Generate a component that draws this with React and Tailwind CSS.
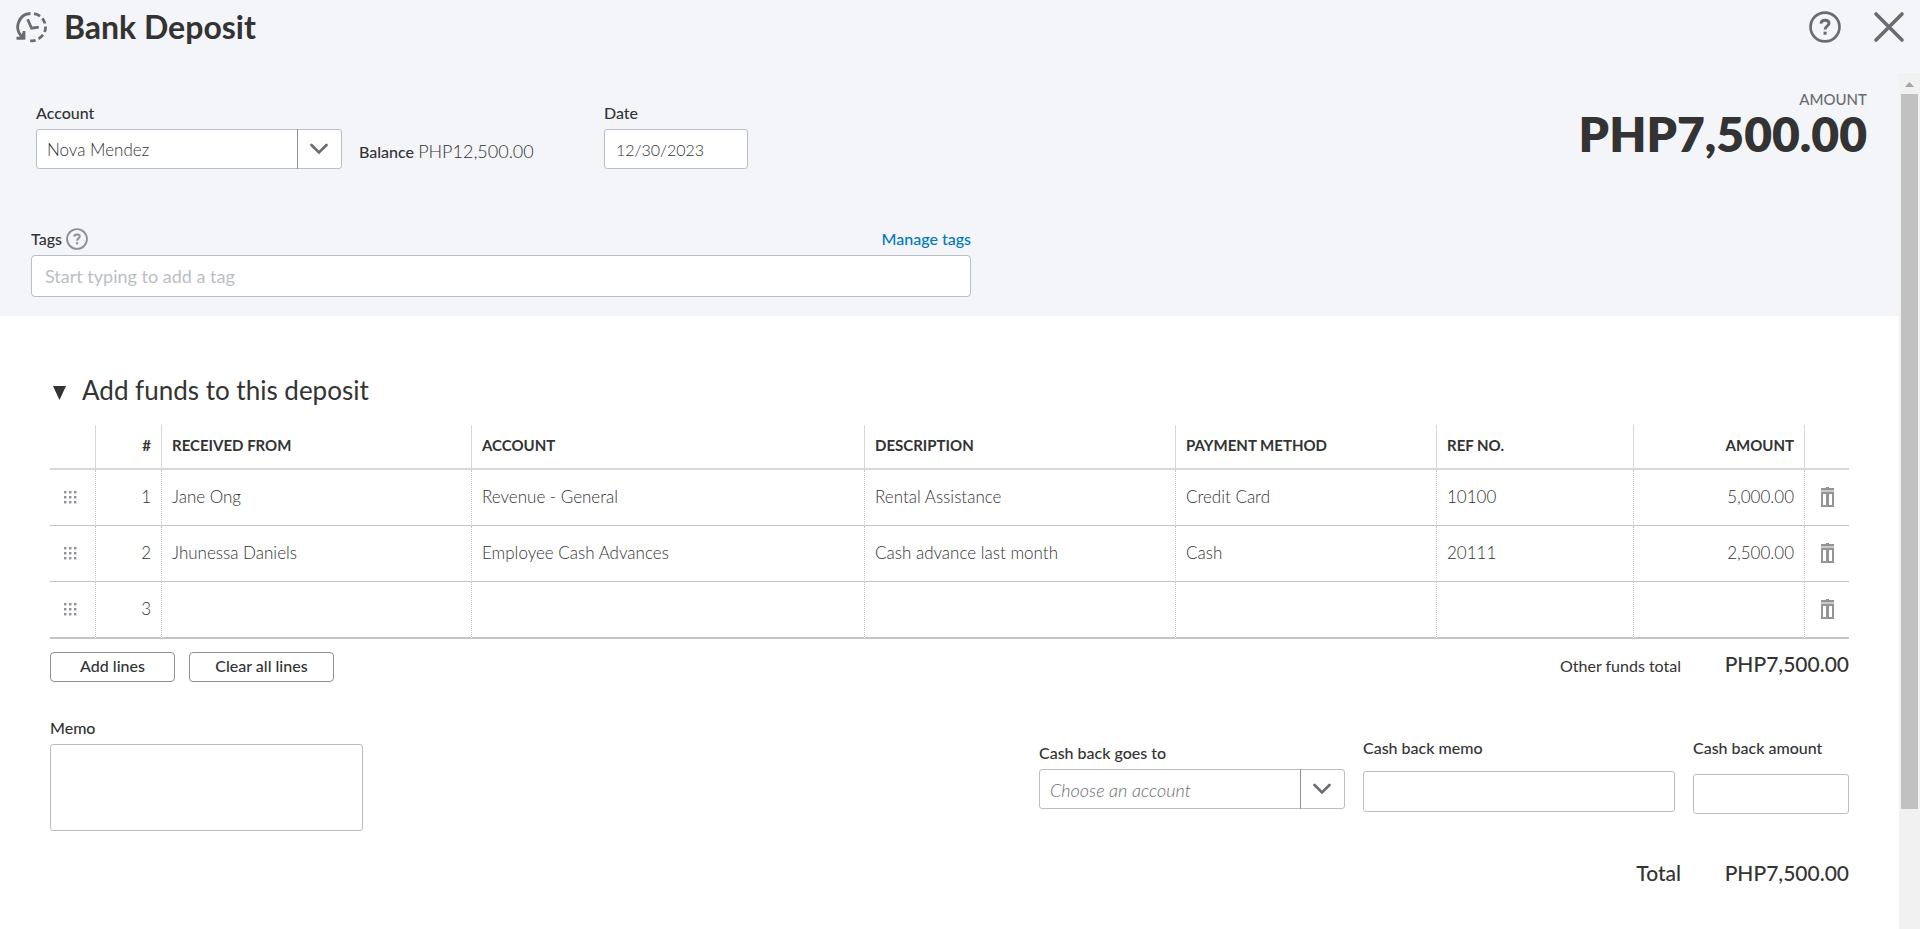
import React, { useState } from "react";

const initialLines = [
  {
    receivedFrom: "Jane Ong",
    account: "Revenue - General",
    description: "Rental Assistance",
    method: "Credit Card",
    refNo: "10100",
    amount: "5,000.00",
  },
  {
    receivedFrom: "Jhunessa Daniels",
    account: "Employee Cash Advances",
    description: "Cash advance last month",
    method: "Cash",
    refNo: "20111",
    amount: "2,500.00",
  },
  {},
];

const labelClass = "block text-[16px] leading-5 font-medium";
const fieldClass =
  "block w-full rounded-[3px] border border-[#babec5] bg-white font-light outline-none";

function HistoryIcon() {
  return (
    <svg width="32" height="32" viewBox="0 0 32 32" fill="none" stroke="#6b6c72" strokeWidth="2.8">
      <path d="M14.5 2.5A13.3 13.3 0 0 0 6 25.5" />
      <path d="M0.5 28.5L8.5 20V28.5Z" fill="#6b6c72" stroke="none" />
      <path d="M8 20V27.2H0.5" />
      <path d="M18 2.6A13.3 13.3 0 0 1 24 5.2M26.3 7.3A13.3 13.3 0 0 1 29 12.5M29.6 15.5A13.3 13.3 0 0 1 28.6 21M27 23.8A13.3 13.3 0 0 1 22.5 27.8M19.6 29.4A13.3 13.3 0 0 1 14.2 29.6" />
      <path d="M11.6 8.2L15.6 17.2L22.8 16.2" />
    </svg>
  );
}

function HelpIcon({ className }) {
  return (
    <svg className={className} viewBox="0 0 31 31" fill="none" stroke="currentColor" strokeWidth="2.6">
      <circle cx="15.5" cy="15.5" r="14" />
      <path d="M11.6 12.2C11.7 10 13.3 9 15.6 9C17.9 9 19.4 10.2 19.4 12C19.4 14.4 15.6 14.6 15.6 18" strokeWidth="2.8" />
      <path d="M15.6 20V23" strokeWidth="3" />
    </svg>
  );
}

function GripIcon() {
  return (
    <svg width="13" height="13" viewBox="0 0 13 13" fill="#8d9096">
      {[0, 5, 10].map((y) =>
        [0, 5, 10].map((x) => (
          <rect key={`${x}-${y}`} x={x} y={y} width="2.4" height="2.4" />
        ))
      )}
    </svg>
  );
}

function TrashIcon() {
  return (
    <svg width="14" height="20" viewBox="0 0 14 20" fill="#949494">
      <path d="M5 0H8V1H13V3H0V1H5Z" />
      <path d="M0 3H13V5H0Z" fill="#c9c9c9" />
      <path fillRule="evenodd" d="M0 5H13V20H0ZM2 7V18H5V7ZM8 7V18H11V7Z" />
    </svg>
  );
}

function Dropdown({ id, label, italic, children }) {
  return (
    <div className="w-[306px]">
      <label htmlFor={id} className={labelClass}>
        {label}
      </label>
      <div className="mt-1.5 grid grid-cols-[1fr_45px]">
        <select
          id={id}
          className={`col-span-2 col-start-1 row-start-1 h-10 appearance-none pt-0.5 pl-2.5 pr-12 ${fieldClass} ${
            italic ? "text-[18px] italic text-[#6b6c72]" : "text-[17px] text-[#333333]"
          }`}
        >
          {children}
        </select>
        <span className="pointer-events-none col-start-2 row-start-1 flex items-center justify-center border-l border-[#8d9096] pr-0.5">
          <svg width="18" height="12" viewBox="0 0 18 12" fill="none" stroke="#6b6c72" strokeWidth="2.6" strokeLinecap="round">
            <path d="M1.5 2L9 9.5L16.5 2" />
          </svg>
        </span>
      </div>
    </div>
  );
}

function Header() {
  return (
    <header className="flex h-[73px] items-start justify-between bg-[#f4f5f8] pl-4 pr-[15px] pt-[11px]">
      <div className="flex items-center gap-4">
        <HistoryIcon />
        <h1 className="text-[32px] leading-8 font-bold">Bank Deposit</h1>
      </div>
      <div className="flex gap-8 text-[#6b6c72]">
        <button type="button" aria-label="Help">
          <HelpIcon className="size-8" />
        </button>
        <button type="button" aria-label="Close">
          <svg width="32" height="32" viewBox="0 0 32 32" fill="none" stroke="currentColor" strokeWidth="3.6" strokeLinecap="round">
            <path d="M3 3L29 29M29 3L3 29" />
          </svg>
        </button>
      </div>
    </header>
  );
}

function DepositDetails() {
  return (
    <section className="flex justify-between bg-[#f4f5f8] pb-[19px] pl-[31px] pr-8">
      <div className="w-[940px] pt-[30px]">
        <div className="flex items-start pl-[5px]">
          <Dropdown id="account" label="Account">
            <option>Nova Mendez</option>
          </Dropdown>
          <p className="ml-[17px] mt-9 w-[245px] leading-6">
            <span className="text-[16px] font-medium">Balance</span>{" "}
            <span className="text-[18px] font-light">PHP12,500.00</span>
          </p>
          <div className="w-36">
            <label htmlFor="date" className={labelClass}>
              Date
            </label>
            <input id="date" defaultValue="12/30/2023" className={`mt-1.5 h-10 px-[11px] text-[16px] ${fieldClass}`} />
          </div>
        </div>

        <div className="mt-[59px] flex items-center justify-between">
          <div className="flex items-center gap-1">
            <label htmlFor="tags" className={labelClass}>
              Tags
            </label>
            <button type="button" aria-label="About tags" className="text-[#8d9096]">
              <HelpIcon className="size-[22px]" />
            </button>
          </div>
          <a href="#tags" className="text-[16px] leading-5 font-medium text-[#0077c5]">
            Manage tags
          </a>
        </div>
        <input
          id="tags"
          placeholder="Start typing to add a tag"
          className="mt-[5px] block h-[42px] w-full rounded-[4px] border border-[#babec5] bg-white px-[13px] text-[18px] outline-none placeholder:text-[#babec5]"
        />
      </div>
      <div className="pt-4 text-right">
        <p className="text-[15px] leading-5 font-medium text-[#6b6c72]">AMOUNT</p>
        <p className="text-[48px] leading-[50px] font-extrabold">PHP7,500.00</p>
      </div>
    </section>
  );
}

function FundsTable({ lines, onRemove }) {
  const th = "border-r border-b-2 border-[#d4d7dc] px-2.5 pb-1";
  const td =
    "border-r border-b border-r-[#c4c4c4] border-b-[#c4c4c4] [border-right-style:dotted] px-2.5 group-last:border-b-2";

  return (
    <table className="w-full table-fixed border-separate border-spacing-0 text-[#333333]">
      <colgroup>
        <col className="w-[46px]" />
        <col className="w-[66px]" />
        <col className="w-[310px]" />
        <col className="w-[393px]" />
        <col className="w-[311px]" />
        <col className="w-[261px]" />
        <col className="w-[197px]" />
        <col className="w-[171px]" />
        <col className="w-[44px]" />
      </colgroup>
      <thead>
        <tr className="h-[45px] text-[15px] leading-5 font-bold">
          <th className={th}></th>
          <th className={`${th} text-right`}>#</th>
          <th className={`${th} text-left`}>RECEIVED FROM</th>
          <th className={`${th} text-left`}>ACCOUNT</th>
          <th className={`${th} text-left`}>DESCRIPTION</th>
          <th className={`${th} text-left`}>PAYMENT METHOD</th>
          <th className={`${th} text-left`}>REF NO.</th>
          <th className={`${th} text-right`}>AMOUNT</th>
          <th className="border-b-2 border-[#d4d7dc]"></th>
        </tr>
      </thead>
      <tbody>
        {lines.map((line, index) => (
          <tr key={index} className="group h-14 text-[17px] leading-6 font-light last:h-[57px]">
            <td className={td}>
              <span className="flex justify-center pr-1">
                <GripIcon />
              </span>
            </td>
            <td className={`${td} pb-0.5 text-right`}>{index + 1}</td>
            <td className={`${td} pb-0.5`}>{line.receivedFrom}</td>
            <td className={`${td} pb-0.5`}>{line.account}</td>
            <td className={`${td} pb-0.5`}>{line.description}</td>
            <td className={`${td} pb-0.5`}>{line.method}</td>
            <td className={`${td} pb-0.5`}>{line.refNo}</td>
            <td className={`${td} pb-0.5 text-right`}>{line.amount}</td>
            <td className="border-b border-[#c4c4c4] pb-0.5 pl-4 group-last:border-b-2">
              <button
                type="button"
                aria-label={`Delete line ${index + 1}`}
                className="block"
                onClick={() => onRemove(index)}
              >
                <TrashIcon />
              </button>
            </td>
          </tr>
        ))}
      </tbody>
    </table>
  );
}

function Scrollbar() {
  return (
    <div className="flex w-[21px] shrink-0 flex-col items-center bg-[#f1f1f1]" aria-hidden="true">
      <svg className="mt-[9px] mb-[7px]" width="9" height="5" viewBox="0 0 9 5" fill="#a3a3a3">
        <path d="M4.5 0L9 5H0Z" />
      </svg>
      <div className="h-[715px] w-[17px] bg-[#c1c1c1]"></div>
    </div>
  );
}

function App() {
  const [lines, setLines] = useState(initialLines);

  const addLines = () => setLines([...lines, {}]);
  const clearLines = () => setLines([{}]);
  const removeLine = (index) => setLines(lines.filter((_, i) => i !== index));

  const smallButton =
    "h-[30px] rounded-[4px] border border-[#8d9096] bg-white pb-0.5 text-[16px] leading-5 font-medium";

  return (
    <div className="flex min-h-screen flex-col bg-white font-['Lato',sans-serif] text-[#333333]">
      <Header />
      <div className="flex flex-1">
        <main className="min-w-0 flex-1">
          <DepositDetails />

          <section className="px-[50px] pt-[58px]">
            <h2 className="mb-[19px] flex items-baseline gap-4 text-[26px] leading-8">
              <svg className="ml-[3px]" width="13" height="14" viewBox="0 0 13 14" fill="#333333">
                <path d="M0 0H13L6.5 14Z" />
              </svg>
              Add funds to this deposit
            </h2>

            <FundsTable lines={lines} onRemove={removeLine} />

            <div className="mt-[13px] flex items-start justify-between">
              <div className="flex gap-3.5">
                <button type="button" className={`w-[125px] ${smallButton}`} onClick={addLines}>
                  Add lines
                </button>
                <button type="button" className={`w-[145px] ${smallButton}`} onClick={clearLines}>
                  Clear all lines
                </button>
              </div>
              <div className="flex items-baseline text-right leading-6">
                <span className="text-[16px]">Other funds total</span>
                <span className="w-[168px] text-[21px] font-medium">PHP7,500.00</span>
              </div>
            </div>

            <div className="mt-[34px] flex items-start justify-between">
              <div className="w-[313px] pt-0.5">
                <label htmlFor="memo" className={labelClass}>
                  Memo
                </label>
                <textarea id="memo" className={`mt-1.5 h-[87px] resize-none px-2.5 py-2 text-[17px] ${fieldClass}`} />
              </div>
              <div className="flex items-start gap-[18px] pt-[22px]">
                <div className="pt-[5px]">
                  <Dropdown id="cash-back-account" label="Cash back goes to" italic>
                    <option>Choose an account</option>
                  </Dropdown>
                </div>
                <div className="w-[312px]">
                  <label htmlFor="cash-back-memo" className={labelClass}>
                    Cash back memo
                  </label>
                  <input id="cash-back-memo" className={`mt-[13px] h-[41px] px-2.5 text-[17px] ${fieldClass}`} />
                </div>
                <div className="w-[156px]">
                  <label htmlFor="cash-back-amount" className={labelClass}>
                    Cash back amount
                  </label>
                  <input
                    id="cash-back-amount"
                    className={`mt-4 h-10 px-2.5 text-right text-[17px] ${fieldClass}`}
                  />
                </div>
              </div>
            </div>

            <div className="mt-7 flex justify-end text-right text-[21px] leading-7 font-medium">
              <span>Total</span>
              <span className="w-[168px]">PHP7,500.00</span>
            </div>
          </section>
        </main>
        <Scrollbar />
      </div>
    </div>
  );
}

export default App;
